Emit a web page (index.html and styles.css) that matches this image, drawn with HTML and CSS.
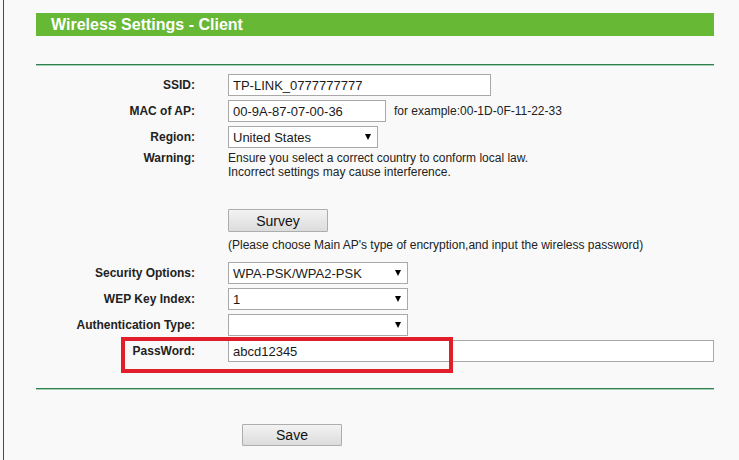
FILE: index.html
```html
<!DOCTYPE html>
<html lang="en">
<head>
    <meta charset="UTF-8">
    <meta name="viewport" content="width=device-width, initial-scale=1.0">
    <title>Wireless Settings - Client</title>
    <link rel="stylesheet" href="styles.css">
</head>
<body>
    <div class="frame">
        <div class="panel">
            <h2 class="title">Wireless Settings - Client</h2>
            <div class="rule"></div>

            <div class="form">
                <div class="row">
                    <label for="ssid">SSID:</label>
                    <input id="ssid" class="field ssid" type="text" value="TP-LINK_0777777777">
                </div>
                <div class="row">
                    <label for="mac">MAC of AP:</label>
                    <div class="inline">
                        <input id="mac" class="field mac" type="text" value="00-9A-87-07-00-36">
                        <span class="hint">for example:00-1D-0F-11-22-33</span>
                    </div>
                </div>
                <div class="row">
                    <label for="region">Region:</label>
                    <span class="picker region">
                        <select id="region" class="field">
                            <option>United States</option>
                        </select>
                    </span>
                </div>
                <div class="row note">
                    <label>Warning:</label>
                    <div>Ensure you select a correct country to conform local law.<br>
                        Incorrect settings may cause interference.</div>
                </div>

                <div class="row survey">
                    <span></span>
                    <button class="btn">Survey</button>
                </div>
                <div class="row note tip">
                    <span></span>
                    <div>(Please choose Main AP's type of encryption,and input the wireless password)</div>
                </div>

                <div class="row security">
                    <label for="sec">Security Options:</label>
                    <span class="picker wide">
                        <select id="sec" class="field">
                            <option>WPA-PSK/WPA2-PSK</option>
                        </select>
                    </span>
                </div>
                <div class="row">
                    <label for="wep">WEP Key Index:</label>
                    <span class="picker wide">
                        <select id="wep" class="field">
                            <option>1</option>
                        </select>
                    </span>
                </div>
                <div class="row">
                    <label for="auth">Authentication Type:</label>
                    <span class="picker wide">
                        <select id="auth" class="field">
                            <option></option>
                        </select>
                    </span>
                </div>
                <div class="row">
                    <label for="pwd">PassWord:</label>
                    <input id="pwd" class="field" type="text" value="abcd12345">
                    <div class="mark"></div>
                </div>
            </div>

            <div class="rule bottom"></div>

            <div class="actions">
                <button class="btn">Save</button>
            </div>
        </div>
    </div>
</body>
</html>
```

FILE: styles.css
```css
body {
    margin: 0;
    font-family: "Liberation Sans", Arial, sans-serif;
    background: #f9f9f9;
    color: #222;
}
.frame {
    margin-left: 3px;
    border-left: 1px solid #4a4a4a;
    height: 460px;
    padding: 13px 0 0 32px;
    box-sizing: border-box;
}
.panel {
    width: 678px;
}
.title {
    margin: 0;
    height: 23px;
    line-height: 23px;
    padding-left: 15px;
    background: #67b835;
    color: #fff;
    font-size: 16px;
    font-weight: bold;
}
/* green divider under the title and above the buttons */
.rule {
    margin-top: 28px;
    height: 1px;
    background: #2f8150;
    border-bottom: 1px solid #a9cdb6;
}
.rule.bottom {
    margin-top: 24px;
}
.form {
    margin-top: 6px;
}
.row {
    position: relative;
    display: grid;
    grid-template-columns: 192px 1fr;
    align-items: center;
    height: 26px;
}
.row label {
    text-align: right;
    padding-right: 33px;
    font-size: 12px;
    font-weight: bold;
    color: #222;
}
.field {
    height: 22px;
    box-sizing: border-box;
    margin: 0;
    padding: 0 4px;
    border: 1px solid #a9a9a9;
    border-radius: 0;
    background: #fff;
    color: #1a1a1a;
    font-family: "Liberation Sans", Arial, sans-serif;
    font-size: 13px;
    outline: none;
}
.ssid {
    width: 263px;
}
.inline {
    display: flex;
    align-items: center;
    gap: 8px;
}
.mac {
    width: 158px;
}
.hint {
    font-size: 12px;
    color: #222;
}
/* selects keep the old flat look with a small black arrow */
.picker {
    position: relative;
    display: block;
    height: 22px;
}
.picker select {
    width: 100%;
    appearance: none;
    -webkit-appearance: none;
}
.picker::after {
    content: "";
    position: absolute;
    right: 7px;
    top: 8px;
    border-left: 3px solid transparent;
    border-right: 3px solid transparent;
    border-top: 6px solid #000;
}
.region {
    width: 150px;
}
.wide {
    width: 180px;
}
.note {
    height: auto;
    align-items: start;
    padding-top: 1px;
    font-size: 12px;
    line-height: 14px;
}
.survey {
    margin-top: 30px;
    height: 23px;
}
.tip {
    margin-top: 6px;
    padding-top: 0;
}
.security {
    margin-top: 8px;
}
.btn {
    width: 100px;
    height: 23px;
    padding: 0;
    border: 1px solid #adadad;
    border-radius: 1px;
    background: linear-gradient(#f3f3f3, #dcdcdc);
    color: #111;
    font-family: "Liberation Sans", Arial, sans-serif;
    font-size: 14px;
    cursor: pointer;
}
.mark {
    position: absolute;
    left: 85px;
    top: -1px;
    width: 332px;
    height: 36px;
    box-sizing: border-box;
    border: 4px solid #e31e2b;
    pointer-events: none;
}
.actions {
    margin-top: 34px;
    padding-left: 206px;
}
.actions .btn {
    height: 22px;
}
```
